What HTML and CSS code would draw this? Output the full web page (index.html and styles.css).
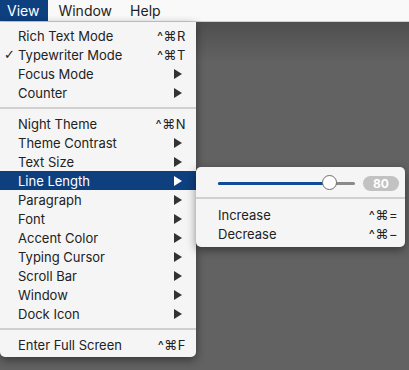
FILE: index.html
```html
<!DOCTYPE html>
<html lang="en">
<head>
    <meta charset="UTF-8">
    <title>View Menu</title>
    <link rel="stylesheet" href="styles.css">
</head>
<body>
    <!-- Barre de menu -->
    <div class="menubar">
        <span class="menubar-item active">View</span>
        <span class="menubar-item">Window</span>
        <span class="menubar-item">Help</span>
    </div>

    <div class="desktop">
        <!-- Menu View -->
        <div class="menu">
            <div class="item"><span class="label">Rich Text Mode</span><span class="key">^⌘R</span></div>
            <div class="item"><span class="check">✓</span><span class="label">Typewriter Mode</span><span class="key">^⌘T</span></div>
            <div class="item"><span class="label">Focus Mode</span><span class="arrow"></span></div>
            <div class="item"><span class="label">Counter</span><span class="arrow"></span></div>
            <div class="separator"></div>
            <div class="item"><span class="label">Night Theme</span><span class="key">^⌘N</span></div>
            <div class="item"><span class="label">Theme Contrast</span><span class="arrow"></span></div>
            <div class="item"><span class="label">Text Size</span><span class="arrow"></span></div>
            <div class="item selected"><span class="label">Line Length</span><span class="arrow"></span></div>
            <div class="item"><span class="label">Paragraph</span><span class="arrow"></span></div>
            <div class="item"><span class="label">Font</span><span class="arrow"></span></div>
            <div class="item"><span class="label">Accent Color</span><span class="arrow"></span></div>
            <div class="item"><span class="label">Typing Cursor</span><span class="arrow"></span></div>
            <div class="item"><span class="label">Scroll Bar</span><span class="arrow"></span></div>
            <div class="item"><span class="label">Window</span><span class="arrow"></span></div>
            <div class="item"><span class="label">Dock Icon</span><span class="arrow"></span></div>
            <div class="separator"></div>
            <div class="item"><span class="label">Enter Full Screen</span><span class="key">^⌘F</span></div>
        </div>

        <!-- Sous-menu Line Length -->
        <div class="submenu">
            <div class="slider-row">
                <div class="slider">
                    <div class="track-fill"></div>
                    <div class="knob"></div>
                </div>
                <span class="badge">80</span>
            </div>
            <div class="separator"></div>
            <div class="item"><span class="label">Increase</span><span class="key">^⌘=</span></div>
            <div class="item"><span class="label">Decrease</span><span class="key">^⌘−</span></div>
        </div>
    </div>
</body>
</html>
```

FILE: styles.css
```css
body {
    margin: 0;
    width: 409px;
    height: 370px;
    overflow: hidden;
    font-family: Inter, "DejaVu Sans", sans-serif;
    font-size: 13px;
    color: #222;
}

.menubar {
    display: flex;
    height: 22px;
    background: #f9f9f9;
    border-bottom: 1px solid #cfcfcf;
    box-sizing: border-box;
}

.menubar-item {
    padding: 0 8px 0 10px;
    line-height: 21px;
    font-size: 14px;
}

.menubar-item.active {
    padding: 0 9px 0 7px;
    background: #0e3f7f;
    color: white;
}

.desktop {
    position: relative;
    height: 348px;
    background: linear-gradient(#4e4e4e, #626262 40px, #626262);
}

.menu {
    position: absolute;
    left: 0;
    top: 0;
    width: 196px;
    padding: 4px 0 3px;
    background: #f5f5f5;
    border-radius: 0 0 5px 5px;
    box-shadow: 0 3px 10px rgba(0, 0, 0, 0.45);
}

.item {
    position: relative;
    display: flex;
    align-items: center;
    height: 19px;
    padding: 0 10px 0 18px;
}

.item .label {
    flex: 1;
}

.item .key {
    letter-spacing: 0.5px;
}

.check {
    position: absolute;
    left: 4px;
    font-family: "DejaVu Sans", sans-serif;
    font-size: 13px;
}

.arrow {
    width: 0;
    height: 0;
    margin-right: 4px;
    border-top: 5px solid transparent;
    border-bottom: 5px solid transparent;
    border-left: 8px solid #333;
}

.item.selected {
    background: #0e3f7f;
    color: white;
}

.item.selected .arrow {
    border-left-color: white;
}

.separator {
    height: 2px;
    margin: 5px 0;
    background: #d0d0d0;
}

.submenu {
    position: absolute;
    left: 196px;
    top: 145px;
    width: 209px;
    padding: 4px 0 4px;
    background: #f5f5f5;
    border-radius: 5px;
    box-shadow: 0 3px 10px rgba(0, 0, 0, 0.45);
}

.submenu .separator {
    margin: 2px 0 6px;
}

.submenu .item {
    padding: 0 7px 0 22px;
}

.slider-row {
    display: flex;
    align-items: center;
    height: 24px;
    padding: 0 6px 0 22px;
}

.slider {
    position: relative;
    width: 137px;
    height: 3px;
    border-radius: 2px;
    background: #8a8a8a;
}

.track-fill {
    width: 112px;
    height: 3px;
    border-radius: 2px;
    background: #0d4c9a;
}

.knob {
    position: absolute;
    left: 104px;
    top: -7px;
    width: 15px;
    height: 15px;
    box-sizing: border-box;
    border-radius: 50%;
    background: white;
    border: 1px solid #6e6e6e;
}

.badge {
    margin-left: auto;
    width: 36px;
    height: 15px;
    line-height: 15px;
    border-radius: 8px;
    background: #c2c2c2;
    color: white;
    font-size: 12px;
    font-weight: bold;
    text-align: center;
}
```
